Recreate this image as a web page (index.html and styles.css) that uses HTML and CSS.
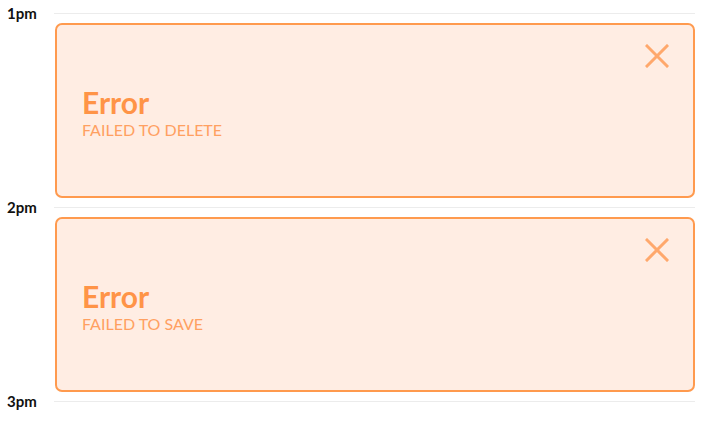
FILE: index.html
```html
<!DOCTYPE html>
<html>
<head>
<meta charset="utf-8">
<link rel="stylesheet" href="styles.css">
</head>
<body>
<div class="day">
  <div class="marker"><span class="hour">1pm</span><div class="line"></div></div>
  <div class="card">
    <svg class="close" width="24" height="24" viewBox="0 0 24 24"><path d="M2 2 L22 22 M22 2 L2 22" stroke="#ffa86c" stroke-width="3" stroke-linecap="square"/></svg>
    <div class="title">Error</div>
    <div class="msg">FAILED TO DELETE</div>
  </div>
  <div class="marker"><span class="hour">2pm</span><div class="line"></div></div>
  <div class="card">
    <svg class="close" width="24" height="24" viewBox="0 0 24 24"><path d="M2 2 L22 22 M22 2 L2 22" stroke="#ffa86c" stroke-width="3" stroke-linecap="square"/></svg>
    <div class="title">Error</div>
    <div class="msg">FAILED TO SAVE</div>
  </div>
  <div class="marker"><span class="hour">3pm</span><div class="line"></div></div>
</div>
</body>
</html>
```
FILE: styles.css
```css
html, body { margin: 0; padding: 0; background: #fff; }
body { font-family: Lato, "Liberation Sans", sans-serif; }
.day { padding-top: 5px; width: 695px; }
.marker { display: flex; align-items: center; height: 17px; }
.hour { width: 54px; padding-left: 7px; box-sizing: border-box; font-weight: 700; font-size: 15px; color: #111; line-height: 17px; }
.line { flex: 1; height: 1px; background: #ececec; }
.card {
  position: relative;
  margin: 1px 0 1px 55px;
  height: 175px;
  box-sizing: border-box;
  border: 2px solid #ff9a4e;
  border-radius: 7px;
  background: #ffede3;
  padding: 60px 0 0 25px;
  color: #ff9447;
}
.close { position: absolute; top: 19px; right: 24px; }
.title { font-weight: 700; font-size: 30px; line-height: 34px; }
.msg { font-size: 16px; line-height: 20px; margin-top: 1px; color: #ffa061; font-weight: 400; }
```
